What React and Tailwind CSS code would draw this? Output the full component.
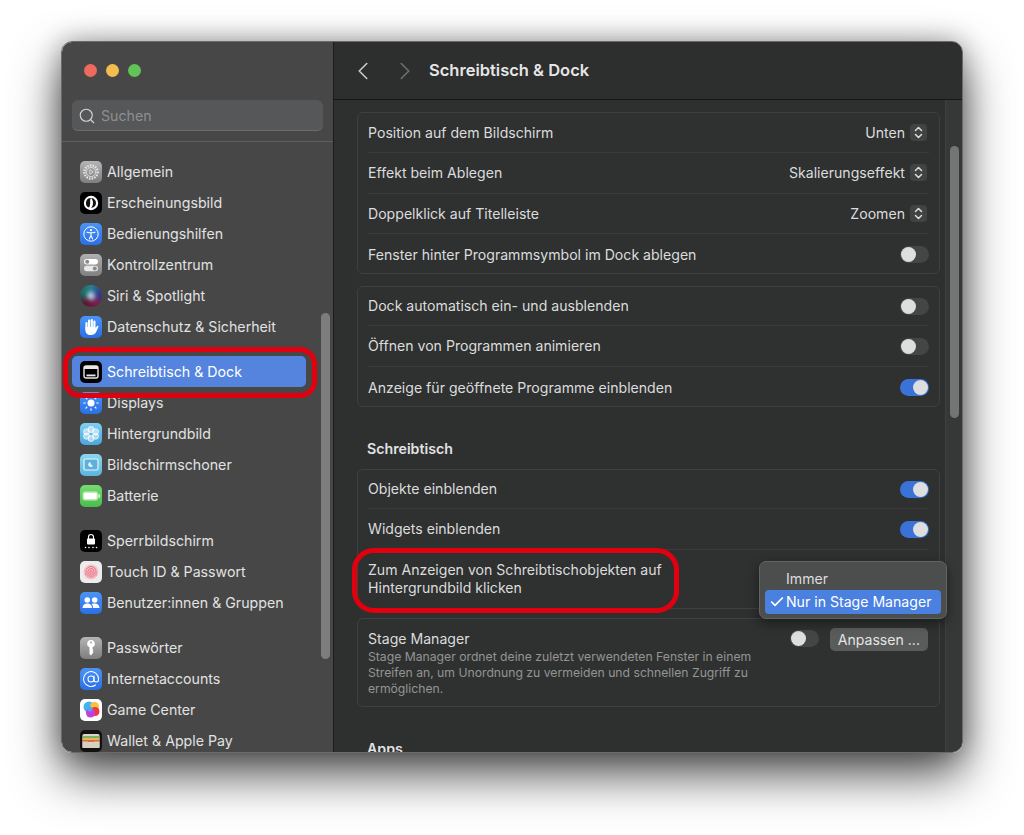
import { Search, ChevronLeft, ChevronRight, Check, AtSign } from 'lucide-react'

const FONT = "font-['Inter','Liberation_Sans',sans-serif]"

const Tile = ({ className = '', children }) => (
  <div className={`w-[22px] h-[22px] rounded-[5px] flex items-center justify-center shrink-0 overflow-hidden ${className}`}>
    {children}
  </div>
)

const ICONS = {
  general: (
    <Tile className="bg-gradient-to-b from-[#b5b5b5] to-[#7e7e7e]">
      <svg width="18" height="18" viewBox="0 0 18 18" fill="none" stroke="#e4e4e4">
        <circle cx="9" cy="9" r="6.6" strokeWidth="2.4" strokeDasharray="1.6 1.1" />
        <circle cx="9" cy="9" r="4.6" strokeWidth="0.8" />
        <path d="M7.8 6.6 11.2 9 7.8 11.4Z" strokeWidth="0.8" />
      </svg>
    </Tile>
  ),
  appearance: (
    <Tile className="bg-black">
      <svg width="16" height="16" viewBox="0 0 16 16">
        <circle cx="8" cy="8" r="7.200" fill="#fff" />
        <path d="M8 3a5 5 0 0 1 0 10c1.300-1.400 2-3.100 2-5S9.300 4.400 8 3Z" fill="#111" />
        <path d="M8 3a5 5 0 0 0-2 9.600C6.800 11.500 7.200 9.800 7.200 8S6.800 4.500 8 3Z" fill="#111" />
      </svg>
    </Tile>
  ),
  access: (
    <Tile className="bg-gradient-to-b from-[#4a94f5] to-[#2b6fe6]">
      <svg width="18" height="18" viewBox="0 0 18 18" fill="none" stroke="#fff" strokeWidth="1">
        <circle cx="9" cy="9" r="7.200" />
        <circle cx="9" cy="5.200" r="1.100" fill="#fff" stroke="none" />
        <path d="M5 7.200c2.600.7 5.400.7 8 0M9 7.800v3M9 10.500l-1.700 3.500M9 10.500l1.700 3.500" strokeWidth="1.100" strokeLinecap="round" />
      </svg>
    </Tile>
  ),
  control: (
    <Tile className="bg-gradient-to-b from-[#b0b0b0] to-[#808080]">
      <svg width="16" height="16" viewBox="0 0 16 16">
        <rect x="1" y="2" width="14" height="5.500" rx="2.750" fill="#fff" />
        <circle cx="4.200" cy="4.750" r="2" fill="#8b8b8b" />
        <rect x="1" y="8.800" width="14" height="5.500" rx="2.750" fill="#e8e8e8" />
        <circle cx="11.800" cy="11.550" r="2" fill="#8b8b8b" />
      </svg>
    </Tile>
  ),
  siri: (
    <Tile className="!rounded-full bg-[conic-gradient(#2a7f8f,#2c3f8c,#7a1c4a,#5a1630,#1f6a60,#2a7f8f)]">
      <div className="w-[8px] h-[8px] rounded-full bg-[#b8d0ea] blur-[2px]" />
    </Tile>
  ),
  privacy: (
    <Tile className="bg-gradient-to-b from-[#4a94f5] to-[#2b6fe6]">
      <svg width="16" height="18" viewBox="0 0 16 18" fill="#fff">
        <rect x="2.400" y="4" width="2.200" height="8" rx="1.100" />
        <rect x="5" y="1.500" width="2.200" height="9" rx="1.100" />
        <rect x="7.700" y="1" width="2.200" height="9" rx="1.100" />
        <rect x="10.300" y="2.500" width="2.200" height="8" rx="1.100" />
        <path d="M2.400 9h10.100v1.500l1.300-2.200c.7-1 2-.2 1.500.9l-2.300 5C11.800 16 10.500 17 8.500 17h-1C4.500 17 2.400 15 2.400 12Z" />
      </svg>
    </Tile>
  ),
  dock: (
    <Tile className="bg-black">
      <svg width="16" height="14" viewBox="0 0 16 14" fill="none">
        <rect x="1" y="1" width="14" height="12" rx="2" stroke="#e8e8e8" strokeWidth="1.400" />
        <rect x="1" y="1" width="14" height="3" fill="#e8e8e8" />
        <rect x="3.500" y="9.500" width="9" height="1.800" fill="#e8e8e8" />
      </svg>
    </Tile>
  ),
  displays: (
    <Tile className="bg-gradient-to-b from-[#4a94f5] to-[#2b6fe6]">
      <svg width="18" height="18" viewBox="0 0 18 18" fill="#fff" stroke="#fff" strokeLinecap="round" strokeWidth="1.200">
        <circle cx="9" cy="9" r="3.500" stroke="none" />
        <path d="M9 1.800v1.400M9 14.800v1.400M1.800 9h1.400M14.800 9h1.400M3.900 3.900l1 1M13.100 13.100l1 1M3.900 14.100l1-1M13.100 4.900l1-1" />
      </svg>
    </Tile>
  ),
  wallpaper: (
    <Tile className="bg-gradient-to-b from-[#7fd0f2] to-[#4aa6dc]">
      <svg width="18" height="18" viewBox="0 0 18 18" fill="#ffffff" fillOpacity="0.500" stroke="#fff" strokeWidth="0.700">
        <circle cx="9" cy="4.500" r="3" />
        <circle cx="9" cy="13.500" r="3" />
        <circle cx="4.500" cy="6.800" r="3" />
        <circle cx="13.500" cy="6.800" r="3" />
        <circle cx="4.500" cy="11.200" r="3" />
        <circle cx="13.500" cy="11.200" r="3" />
      </svg>
    </Tile>
  ),
  saver: (
    <Tile className="bg-gradient-to-b from-[#8ad6ee] to-[#5cb4dc]">
      <svg width="18" height="16" viewBox="0 0 18 16" fill="none">
        <rect x="2" y="2" width="14" height="11" rx="1.500" fill="#5cb0da" stroke="#e4f5fc" strokeWidth="1.200" />
        <path d="M8.500 5a2.500 2.500 0 1 0 2.500 3.400A3 3 0 0 1 8.500 5Z" fill="#e4f5fc" />
      </svg>
    </Tile>
  ),
  battery: (
    <Tile className="bg-gradient-to-b from-[#74dc70] to-[#4cbb4c]">
      <svg width="18" height="10" viewBox="0 0 18 10">
        <rect x="0.500" y="0.500" width="15.500" height="9" rx="2.500" fill="#fff" fillOpacity="0.600" />
        <rect x="2" y="2" width="12.500" height="6" rx="1.300" fill="#fff" />
        <rect x="16.500" y="3.200" width="1.300" height="3.600" rx="0.600" fill="#fff" />
      </svg>
    </Tile>
  ),
  lock: (
    <Tile className="bg-black">
      <svg width="16" height="18" viewBox="0 0 16 18" fill="#fff">
        <path d="M5.500 7V5a2.500 2.500 0 0 1 5 0v2" fill="none" stroke="#fff" strokeWidth="1.200" />
        <rect x="4" y="6.500" width="8" height="6" rx="1" />
        <circle cx="2.500" cy="15.500" r="0.800" />
        <circle cx="6" cy="15.500" r="0.800" />
        <circle cx="10" cy="15.500" r="0.800" />
        <circle cx="13.500" cy="15.500" r="0.800" />
      </svg>
    </Tile>
  ),
  touch: (
    <Tile className="bg-[#ececec]">
      <svg width="18" height="18" viewBox="0 0 18 18" fill="none" stroke="#e8687a" strokeWidth="0.900" strokeLinecap="round">
        <circle cx="9" cy="9" r="7.500" fill="#f4c4ca" stroke="none" />
        <path d="M4 12V8.500a5 5 0 0 1 10 0V12" />
        <path d="M6 13.500V8.500a3 3 0 0 1 6 0v5" />
        <path d="M8 14.500v-6a1 1 0 0 1 2 0v6" />
      </svg>
    </Tile>
  ),
  users: (
    <Tile className="bg-gradient-to-b from-[#4a94f5] to-[#2b6fe6]">
      <svg width="18" height="14" viewBox="0 0 18 14" fill="#fff">
        <circle cx="5.300" cy="4" r="2.800" />
        <path d="M0.500 12c0-3 2-4.500 4.800-4.500S10 9 10 12Z" />
        <circle cx="12.700" cy="4" r="2.800" />
        <path d="M11 12c0-1.500-.4-3-1.500-4 1-.4 2-.5 3.200-.5 2.800 0 4.800 1.500 4.800 4.500Z" />
      </svg>
    </Tile>
  ),
  passwords: (
    <Tile className="bg-gradient-to-b from-[#b5b5b5] to-[#7e7e7e]">
      <svg width="12" height="18" viewBox="0 0 12 18" fill="#fff">
        <path d="M6 1a3.800 3.800 0 0 1 1.500 7.300V10l1 1-1 1 1 1-2.500 3.500L4.500 15V8.300A3.800 3.800 0 0 1 6 1Z" />
        <circle cx="6" cy="3.500" r="0.900" fill="#999" />
      </svg>
    </Tile>
  ),
  internet: (
    <Tile className="bg-gradient-to-b from-[#4a94f5] to-[#2b6fe6]">
      <AtSign size={18} color="#fff" strokeWidth={1.400} />
    </Tile>
  ),
  game: (
    <Tile className="bg-white">
      <svg width="19" height="19" viewBox="0 0 19 19">
        <circle cx="7" cy="7" r="5.500" fill="#3fb4f0" />
        <circle cx="12.500" cy="6.500" r="4.500" fill="#f5c23c" />
        <circle cx="13" cy="11.500" r="4.500" fill="#f0383e" />
        <circle cx="8.500" cy="13" r="4.500" fill="#c03fe0" />
        <circle cx="8" cy="9" r="2.500" fill="#5aa0f0" />
      </svg>
    </Tile>
  ),
  wallet: (
    <Tile className="bg-[#111]">
      <svg width="18" height="14" viewBox="0 0 18 14">
        <rect x="0.500" y="0" width="17" height="14" rx="1.500" fill="#dcd4c4" />
        <rect x="0.500" y="2" width="17" height="2" fill="#7fb06a" />
        <rect x="0.500" y="4" width="17" height="2" fill="#e6b64a" />
        <rect x="0.500" y="6" width="17" height="2" fill="#d9684c" />
        <path d="M0.500 7.500h5.500a3 2 0 0 0 6 0h5.500V14H.5Z" fill="#d6cfc0" />
      </svg>
    </Tile>
  ),
}

const SIDEBAR = [
  [
    ['general', 'Allgemein'],
    ['appearance', 'Erscheinungsbild'],
    ['access', 'Bedienungshilfen'],
    ['control', 'Kontrollzentrum'],
    ['siri', 'Siri & Spotlight'],
    ['privacy', 'Datenschutz & Sicherheit'],
  ],
  [
    ['dock', 'Schreibtisch & Dock', true],
    ['displays', 'Displays'],
    ['wallpaper', 'Hintergrundbild'],
    ['saver', 'Bildschirmschoner'],
    ['battery', 'Batterie'],
  ],
  [
    ['lock', 'Sperrbildschirm'],
    ['touch', 'Touch ID & Passwort'],
    ['users', 'Benutzer:innen & Gruppen'],
  ],
  [
    ['passwords', 'Passwörter'],
    ['internet', 'Internetaccounts'],
    ['game', 'Game Center'],
    ['wallet', 'Wallet & Apple Pay'],
  ],
]

const Stepper = () => (
  <div className="w-[17px] h-[17px] rounded-[4px] bg-[#414343] flex items-center justify-center ml-[5px]">
    <svg width="9" height="13" viewBox="0 0 9 13" fill="none" stroke="#dcdcdc" strokeWidth="1.500" strokeLinecap="round" strokeLinejoin="round">
      <path d="M1.500 4.500 4.500 1.500 7.500 4.500M1.500 8.500 4.500 11.500 7.500 8.500" />
    </svg>
  </div>
)

const Toggle = ({ on, className = '' }) => (
  <div className={`w-[29px] h-[17px] rounded-full flex items-center px-[1px] ${on ? 'bg-[#3a72d8] justify-end' : 'bg-[#444646] justify-start'} ${className}`}>
    <div className="w-[15px] h-[15px] rounded-full bg-[#dedede]" />
  </div>
)

// row heights in the picture alternate by a pixel, so each row passes its own
const Row = ({ label, value, toggle, last, height = 'h-[40px]' }) => (
  <div className={`${height} mx-[10px] flex items-center justify-between ${last ? 'pt-[2px]' : 'border-b border-[#3a3c3c]'}`}>
    <span className="text-[14.100px] text-[#dcdcdc]">{label}</span>
    {value && (
      <div className="flex items-center mr-[2px]">
        <span className="text-[14.100px] text-[#dcdcdc]">{value}</span>
        <Stepper />
      </div>
    )}
    {toggle !== undefined && <Toggle on={toggle} />}
  </div>
)

const Panel = ({ className = '', children }) => (
  <div className={`rounded-[6px] border border-[#3f4141] bg-[#2f3131] ${className}`}>{children}</div>
)

export default function App() {
  return (
    <div className={`w-[1024px] h-[835px] bg-white pt-[41px] pl-[61px] relative overflow-hidden ${FONT}`}>
      <div className="w-[902px] h-[712px] rounded-[11px] overflow-hidden flex border border-[#6a6a6a] shadow-[0_22px_48px_rgba(0,0,0,0.68),0_0_26px_rgba(0,0,0,0.3)]">
        {/* Sidebar */}
        <aside className="w-[271px] h-full bg-[#474747] shrink-0 relative overflow-hidden">
          <div className="h-[58px] flex items-center gap-[9px] pl-[22px] pb-[1px]">
            <div className="w-[13px] h-[13px] rounded-full bg-[#ee6a5f]" />
            <div className="w-[13px] h-[13px] rounded-full bg-[#f5bd4f]" />
            <div className="w-[13px] h-[13px] rounded-full bg-[#61c454]" />
          </div>
          <div className="mx-[10px] h-[31px] rounded-[6px] bg-[#565758] border-b border-[#6a6b6b] flex items-center pl-[6px] gap-[5px]">
            <Search size={18} color="#d4d4d4" strokeWidth={1.500} className="mt-[1px]" />
            <span className="mt-[1px] text-[14.200px] text-[#8e8f8f]">Suchen</span>
          </div>
          <div className="h-[11px] border-b border-[#5f5f5f]" />
          <nav className="pt-[14px] flex flex-col gap-[14px]">
            {SIDEBAR.map((group, i) => (
              <div key={i} className="flex flex-col">
                {group.map(([icon, label, active]) => (
                  <div
                    key={label}
                    className={`ml-[10px] w-[234px] h-[31px] flex items-center gap-[5px] pl-[8px] shrink-0 rounded-[5px] ${active ? 'bg-[#5484dd]' : ''}`}
                  >
                    {ICONS[icon]}
                    <span className={`text-[14.200px] ${active ? 'text-white' : 'text-[#e2e2e2]'}`}>{label}</span>
                  </div>
                ))}
              </div>
            ))}
          </nav>
          <div className="absolute left-[259px] top-[271px] w-[9px] h-[346px] rounded-full bg-[#7d7d7d]" />
        </aside>

        {/* Content */}
        <main className="flex-1 h-full bg-[#2e3030] border-l border-[#1c1c1c] relative overflow-hidden">
          <header className="h-[58px] bg-[#2d2e2e] border-b border-[#161616] flex items-center pl-[14px]">
            <ChevronLeft size={30} color="#c8c8c8" strokeWidth={1.300} />
            <ChevronRight size={30} color="#6e6e6e" strokeWidth={1.300} className="ml-[12px]" />
            <h1 className="ml-[9px] text-[16.500px] font-semibold text-[#e6e6e6]">Schreibtisch &amp; Dock</h1>
          </header>

          <div className="pl-[23px] w-[606px] pt-[12px]">
            <Panel>
              <Row label="Position auf dem Bildschirm" value="Unten" />
              <Row label="Effekt beim Ablegen" value="Skalierungseffekt" height="h-[41px]" />
              <Row label="Doppelklick auf Titelleiste" value="Zoomen" />
              <Row label="Fenster hinter Programmsymbol im Dock ablegen" toggle={false} last height="h-[39px]" />
            </Panel>
            <Panel className="mt-[12px]">
              <Row label="Dock automatisch ein- und ausblenden" toggle={false} height="h-[39px]" />
              <Row label="Öffnen von Programmen animieren" toggle={false} height="h-[41px]" />
              <Row label="Anzeige für geöffnete Programme einblenden" toggle={true} last height="h-[39px]" />
            </Panel>
            <h2 className="mt-[32px] mb-[10px] pl-[10px] text-[14.200px] leading-[20px] font-semibold text-[#e2e2e2]">Schreibtisch</h2>
            <Panel>
              <Row label="Objekte einblenden" toggle={true} height="h-[39px]" />
              <Row label="Widgets einblenden" toggle={true} height="h-[41px]" />
              <div className="h-[58px] mx-[10px] flex items-center">
                <span className="text-[14.100px] leading-[18px] text-[#dcdcdc]">
                  Zum Anzeigen von Schreibtischobjekten auf
                  <br />
                  Hintergrundbild klicken
                </span>
              </div>
            </Panel>
            <Panel className="mt-[9px] h-[89px] pl-[10px] pr-[11px] pt-[10px] flex justify-between">
              <div>
                <div className="text-[14.100px] leading-[20px] text-[#dcdcdc]">Stage Manager</div>
                <p className="text-[12.200px] leading-[16px] text-[#949494] w-[400px]">
                  Stage Manager ordnet deine zuletzt verwendeten Fenster in einem Streifen an, um Unordnung zu vermeiden und schnellen Zugriff zu ermöglichen.
                </p>
              </div>
              <div className="flex items-start gap-[11px]">
                <Toggle on={false} className="mt-[1px]" />
                <div className="h-[23px] -mt-[1px] px-[8px] rounded-[5px] bg-[#5a5b5b] text-[14.100px] leading-[23px] text-[#e4e4e4] whitespace-nowrap">
                  Anpassen ...
                </div>
              </div>
            </Panel>
            <h2 className="mt-[32px] pl-[10px] text-[14.200px] leading-[20px] font-semibold text-[#e2e2e2]">Apps</h2>
          </div>

          {/* Scrollbar */}
          <div className="absolute right-0 top-[58px] bottom-0 w-[17px] bg-[#363838] border-l border-[#3e4040]">
            <div className="absolute left-[4px] top-[46px] w-[9px] h-[272px] rounded-full bg-[#737575]" />
          </div>
        </main>
      </div>

      {/* Popup menu */}
      <div className="absolute left-[759px] top-[561px] w-[188px] h-[58px] rounded-[7px] bg-[#4c4d4d] border border-[#626363] shadow-[0_4px_12px_rgba(0,0,0,0.45)] px-[5px] pt-[5px]">
        <div className="h-[23px] pl-[21px] text-[14.100px] leading-[24px] text-[#dedede]">Immer</div>
        <div className="h-[24px] rounded-[4px] bg-[#4a80e0] flex items-center pl-[4px] gap-[1px] text-[14.100px] text-white whitespace-nowrap">
          <Check size={16} color="#fff" strokeWidth={2.600} />
          <span>Nur in Stage Manager</span>
        </div>
      </div>

      {/* Red annotation rings */}
      <div className="absolute left-[63px] top-[347px] w-[254px] h-[51px] rounded-[17px] border-[5px] border-[#e2000f] pointer-events-none" />
      <div className="absolute left-[352px] top-[548px] w-[327px] h-[65px] rounded-[22px] border-[5px] border-[#e2000f] pointer-events-none" />
    </div>
  )
}
